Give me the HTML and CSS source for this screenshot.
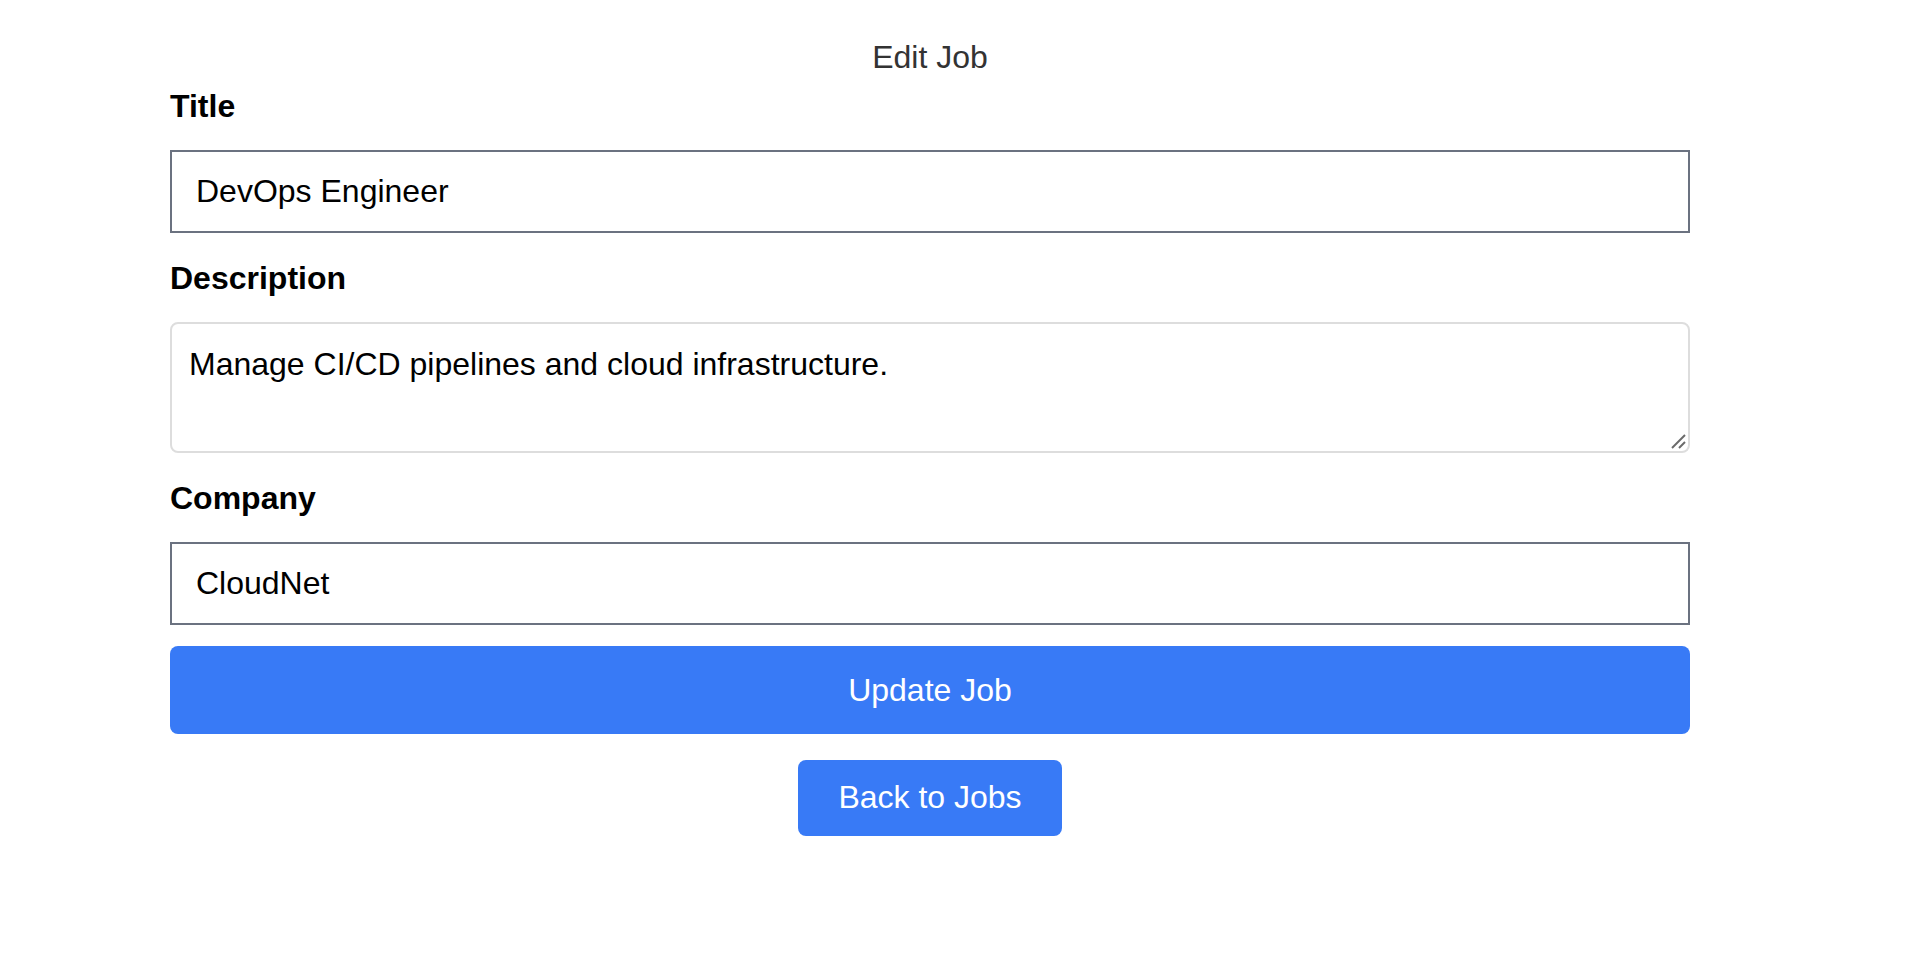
FILE: index.html
```html
<!DOCTYPE html>
<html lang="en">
<head>
<meta charset="utf-8">
<title>Edit Job</title>
<link rel="stylesheet" href="styles.css">
</head>
<body>
<main class="page">
  <h2 class="heading">Edit Job</h2>
  <form class="form">
    <label class="label" for="title">Title</label>
    <input class="field" id="title" type="text" value="DevOps Engineer">
    <label class="label" for="desc">Description</label>
    <div class="area-wrap">
      <textarea class="area" id="desc">Manage CI/CD pipelines and cloud infrastructure.</textarea>
      <svg class="grip" width="16" height="16" viewBox="0 0 16 16" aria-hidden="true">
        <line x1="2" y1="15" x2="15" y2="2" stroke="#6a6a6a" stroke-width="2"/>
        <line x1="9" y1="15" x2="15" y2="9" stroke="#6a6a6a" stroke-width="2"/>
      </svg>
    </div>
    <label class="label" for="company">Company</label>
    <input class="field" id="company" type="text" value="CloudNet">
    <button class="btn btn-wide" type="button">Update Job</button>
  </form>
  <div class="back-row">
    <a class="btn btn-back" href="#">Back to Jobs</a>
  </div>
</main>
</body>
</html>
```
FILE: styles.css
```css
* { box-sizing: border-box; }
html, body { margin: 0; padding: 0; background: #ffffff; }
body {
  font-family: "Liberation Sans", Arial, Helvetica, sans-serif;
  font-size: 32px;
  line-height: 37px;
  color: #000;
}
.page {
  width: 1520px;
  margin-left: 170px;
  padding-top: 39px;
}
.heading {
  margin: 0;
  font-size: 32px;
  font-weight: 400;
  line-height: 37px;
  color: #333333;
  text-align: center;
}
.form {
  display: flex;
  flex-direction: column;
  margin-top: 12px;
}
.label {
  display: block;
  font-weight: 700;
  font-size: 32px;
  line-height: 37px;
  margin-bottom: 25px;
}
.field {
  display: block;
  width: 100%;
  height: 83px;
  padding: 0 24px;
  border: 2px solid #6b7280;
  border-radius: 0;
  font: inherit;
  font-size: 32px;
  color: #000;
  background: #fff;
  margin: 0 0 27px;
  outline: none;
}
.area-wrap {
  position: relative;
  margin-bottom: 27px;
}
.area {
  display: block;
  width: 100%;
  height: 131px;
  padding: 22px 17px 12px;
  border: 2px solid #dddddd;
  border-radius: 8px;
  font: inherit;
  font-size: 32px;
  line-height: 37px;
  color: #000;
  background: #fff;
  resize: none;
  outline: none;
}
.grip {
  position: absolute;
  right: 4px;
  bottom: 4px;
}
.btn {
  display: block;
  background: #387af6;
  color: #ffffff;
  border: none;
  border-radius: 8px;
  font: inherit;
  font-size: 32px;
  line-height: 37px;
  text-align: center;
  text-decoration: none;
  cursor: pointer;
}
.btn-wide {
  width: 100%;
  padding: 26px 0 25px;
  margin-top: -6px;
}
.back-row {
  display: flex;
  justify-content: center;
  margin-top: 26px;
}
.btn-back {
  padding: 19px 40px 20px;
}
```
